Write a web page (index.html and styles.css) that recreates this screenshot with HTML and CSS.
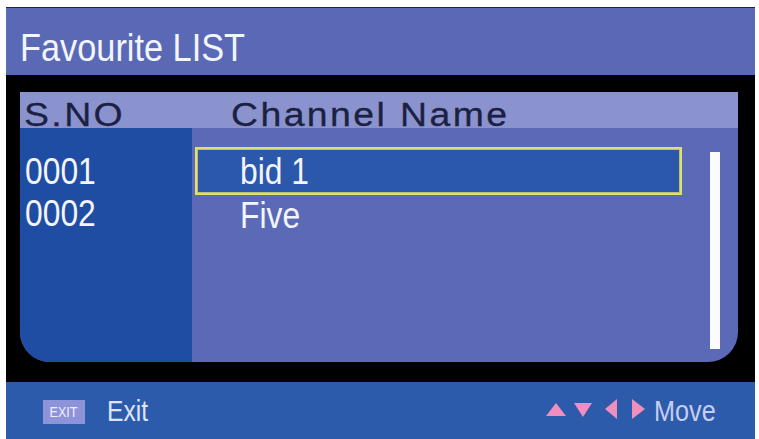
FILE: index.html
```html
<!DOCTYPE html>
<html lang="en">
<head>
<meta charset="utf-8">
<title>Favourite LIST</title>
<link rel="stylesheet" href="styles.css">
</head>
<body>
<div class="screen">
  <div class="titlebar"><span class="title">Favourite LIST</span></div>
  <div class="frame">
    <div class="panel">
      <div class="head">
        <div class="h-no"><span class="wide">S.NO</span></div>
        <div class="h-name"><span class="wide">Channel Name</span></div>
      </div>
      <div class="rows">
        <ul class="nos">
          <li><span class="cond">0001</span></li>
          <li><span class="cond">0002</span></li>
        </ul>
        <div class="names">
          <ul class="list">
            <li class="item sel"><span class="cond">bid 1</span></li>
            <li class="item"><span class="cond">Five</span></li>
          </ul>
          <div class="scroll"></div>
        </div>
      </div>
    </div>
  </div>
  <div class="footer">
    <span class="badge"><span class="badge-text">EXIT</span></span>
    <span class="key-label exit">Exit</span>
    <div class="nav">
      <span class="tri up"></span>
      <span class="tri down"></span>
      <span class="tri left"></span>
      <span class="tri right"></span>
      <span class="key-label move">Move</span>
    </div>
  </div>
</div>
</body>
</html>
```
FILE: styles.css
```css
html, body {
  margin: 0;
  padding: 0;
  background: #ffffff;
  overflow: hidden;
}

body {
  font-family: "Liberation Sans", Arial, sans-serif;
}

.screen {
  margin: 7px 4px 0 6px;
  height: 432px;
  background: #000000;
  display: flex;
  flex-direction: column;
}

.titlebar {
  box-sizing: border-box;
  height: 68px;
  border-top: 1px solid #1c2254;
  background: #5a69b6;
  padding: 20px 0 0 14px;
}

.title {
  display: inline-block;
  font-size: 39px;
  line-height: 39px;
  color: #f3f5ff;
  transform: scaleX(0.88);
  transform-origin: left center;
  white-space: nowrap;
}

.frame {
  padding: 17px 17px 20px 14px;
  background: #000000;
}

.panel {
  height: 270px;
  border-radius: 0 0 30px 30px;
  overflow: hidden;
  background: #5a6ab6;
  display: flex;
  flex-direction: column;
}

.head {
  box-sizing: border-box;
  height: 36px;
  padding-top: 5px;
  background: #8b93cf;
  display: flex;
  font-size: 34px;
  line-height: 34px;
  color: #1b2142;
  white-space: nowrap;
}

.wide {
  display: inline-block;
  letter-spacing: 2.2px;
  transform: scaleX(1.1);
  transform-origin: left center;
  -webkit-text-stroke: 0.3px #1b2142;
}

.h-no {
  width: 172px;
  box-sizing: border-box;
  padding-left: 4px;
}

.h-name {
  padding-left: 39px;
}

.rows {
  flex: 1;
  display: flex;
}

.nos {
  list-style: none;
  margin: 0;
  width: 172px;
  box-sizing: border-box;
  padding: 23px 0 0 5px;
  background: #1f4da3;
  font-size: 37px;
  line-height: 42px;
  color: #f3f5ff;
}

.cond {
  display: inline-block;
  transform: scaleX(0.86);
  transform-origin: left center;
  white-space: nowrap;
}

.names {
  flex: 1;
  display: flex;
  align-items: flex-start;
}

.list {
  list-style: none;
  margin: 0 0 0 3px;
  padding: 19px 0 0;
  width: 487px;
  font-size: 37px;
  color: #f3f5ff;
}

.item {
  padding-left: 45px;
  line-height: 42px;
}

.item.sel {
  border: 2px solid #e2df6c;
  background: #2b58ab;
  padding: 1px 0 0 43px;
  line-height: 43px;
  box-shadow: inset 0 0 0 1px #b9c07a;
}

.scroll {
  margin: 24px 0 0 28px;
  width: 10px;
  height: 197px;
  background: #fafbff;
}

.footer {
  flex: 1;
  box-sizing: border-box;
  background: #2d5bab;
  display: flex;
  align-items: center;
  padding: 2px 30px 0 37px;
}

.badge {
  width: 42px;
  height: 24px;
  background: #8e93d9;
  display: flex;
  align-items: center;
  justify-content: center;
}

.badge-text {
  display: inline-block;
  font-size: 14px;
  line-height: 14px;
  color: #eef0ff;
  transform: scaleX(0.9);
}

.key-label {
  display: inline-block;
  font-size: 29px;
  line-height: 29px;
  transform-origin: left center;
  white-space: nowrap;
}

.exit {
  margin-left: 22px;
  color: #dde4ff;
  transform: scaleX(0.85);
}

.nav {
  margin-left: auto;
  display: flex;
  align-items: center;
}

.move {
  margin-left: 9px;
  color: #c5cdf2;
  transform: scaleX(0.87);
}

.tri {
  width: 0;
  height: 0;
  border-style: solid;
  border-color: transparent;
}

.tri.up {
  border-width: 0 10px 13px 10px;
  border-bottom-color: #f08fbd;
  margin-bottom: 4px;
}

.tri.down {
  margin-left: 8px;
  border-width: 14px 9.5px 0 9.5px;
  border-top-color: #f08fbd;
  margin-bottom: 4px;
}

.tri.left {
  margin-left: 13px;
  border-width: 10.5px 12px 10.5px 0;
  border-right-color: #f08fbd;
  margin-bottom: 6px;
}

.tri.right {
  margin-left: 15px;
  border-width: 10.5px 0 10.5px 13px;
  border-left-color: #f08fbd;
  margin-bottom: 6px;
}
```
